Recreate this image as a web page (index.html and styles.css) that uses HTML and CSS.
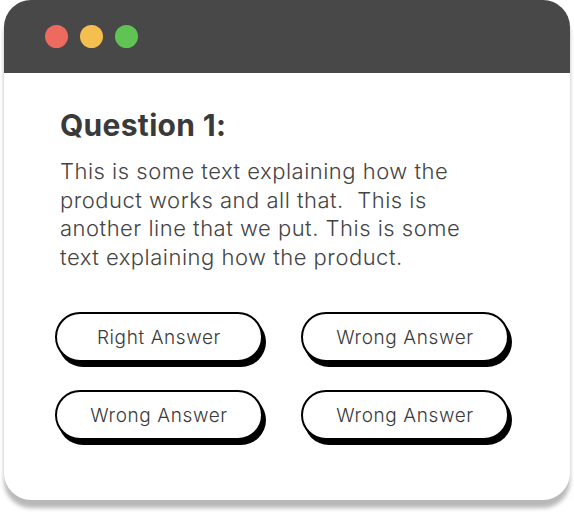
FILE: index.html
```html
<!DOCTYPE html>
<html lang="en">
<head>
<meta charset="utf-8">
<title>Question 1</title>
<link rel="stylesheet" href="styles.css">
</head>
<body>
<div class="window">
  <div class="titlebar">
    <span class="dot dot-red"></span>
    <span class="dot dot-yellow"></span>
    <span class="dot dot-green"></span>
  </div>
  <div class="content">
    <h1 class="question-title">Question 1:</h1>
    <p class="question-text">This is some text explaining how the product works and all that.&nbsp; This is another line that we put. This is some text explaining how the product.</p>
    <div class="answers">
      <button class="answer">Right Answer</button>
      <button class="answer">Wrong Answer</button>
      <button class="answer">Wrong Answer</button>
      <button class="answer">Wrong Answer</button>
    </div>
  </div>
</div>
</body>
</html>
```
FILE: styles.css
```css
html, body {
  margin: 0;
  padding: 0;
  background: #ffffff;
}
body {
  padding: 0 4px 15px;
  font-family: Inter, "Noto Sans", sans-serif;
}
.window {
  width: 566px;
  height: 500px;
  background: #ffffff;
  border-radius: 27px;
  overflow: hidden;
  box-shadow: 0 8px 4px rgba(0, 0, 0, 0.28);
  display: flex;
  flex-direction: column;
}
.titlebar {
  height: 73px;
  background: #484848;
  display: flex;
  align-items: center;
  gap: 12px;
  padding-left: 41px;
  flex-shrink: 0;
}
.dot {
  width: 23px;
  height: 23px;
  border-radius: 50%;
  display: block;
}
.dot-red { background: #ee6a5f; }
.dot-yellow { background: #f5bf4f; }
.dot-green { background: #5fc454; }
.content {
  padding: 34px 51px 0;
}
.question-title {
  margin: 0 0 14px;
  padding-left: 5px;
  font-size: 30px;
  line-height: 36px;
  font-weight: 700;
  letter-spacing: 0.3px;
  color: #3a3a3a;
}
.question-text {
  margin: 0 0 41px;
  padding-left: 5px;
  width: 410px;
  font-size: 22px;
  line-height: 28.6px;
  font-weight: 300;
  letter-spacing: 0.5px;
  color: #444444;
}
.answers {
  display: grid;
  grid-template-columns: 208px 208px;
  column-gap: 38px;
  row-gap: 28px;
}
.answer {
  height: 50px;
  border: 2px solid #000000;
  border-radius: 25px;
  background: #ffffff;
  box-shadow: 3px 5px 0 #000000;
  font-family: Inter, "Noto Sans", sans-serif;
  font-size: 19px;
  font-weight: 300;
  letter-spacing: 0.6px;
  color: #3a3a3a;
  padding: 0;
}
```
